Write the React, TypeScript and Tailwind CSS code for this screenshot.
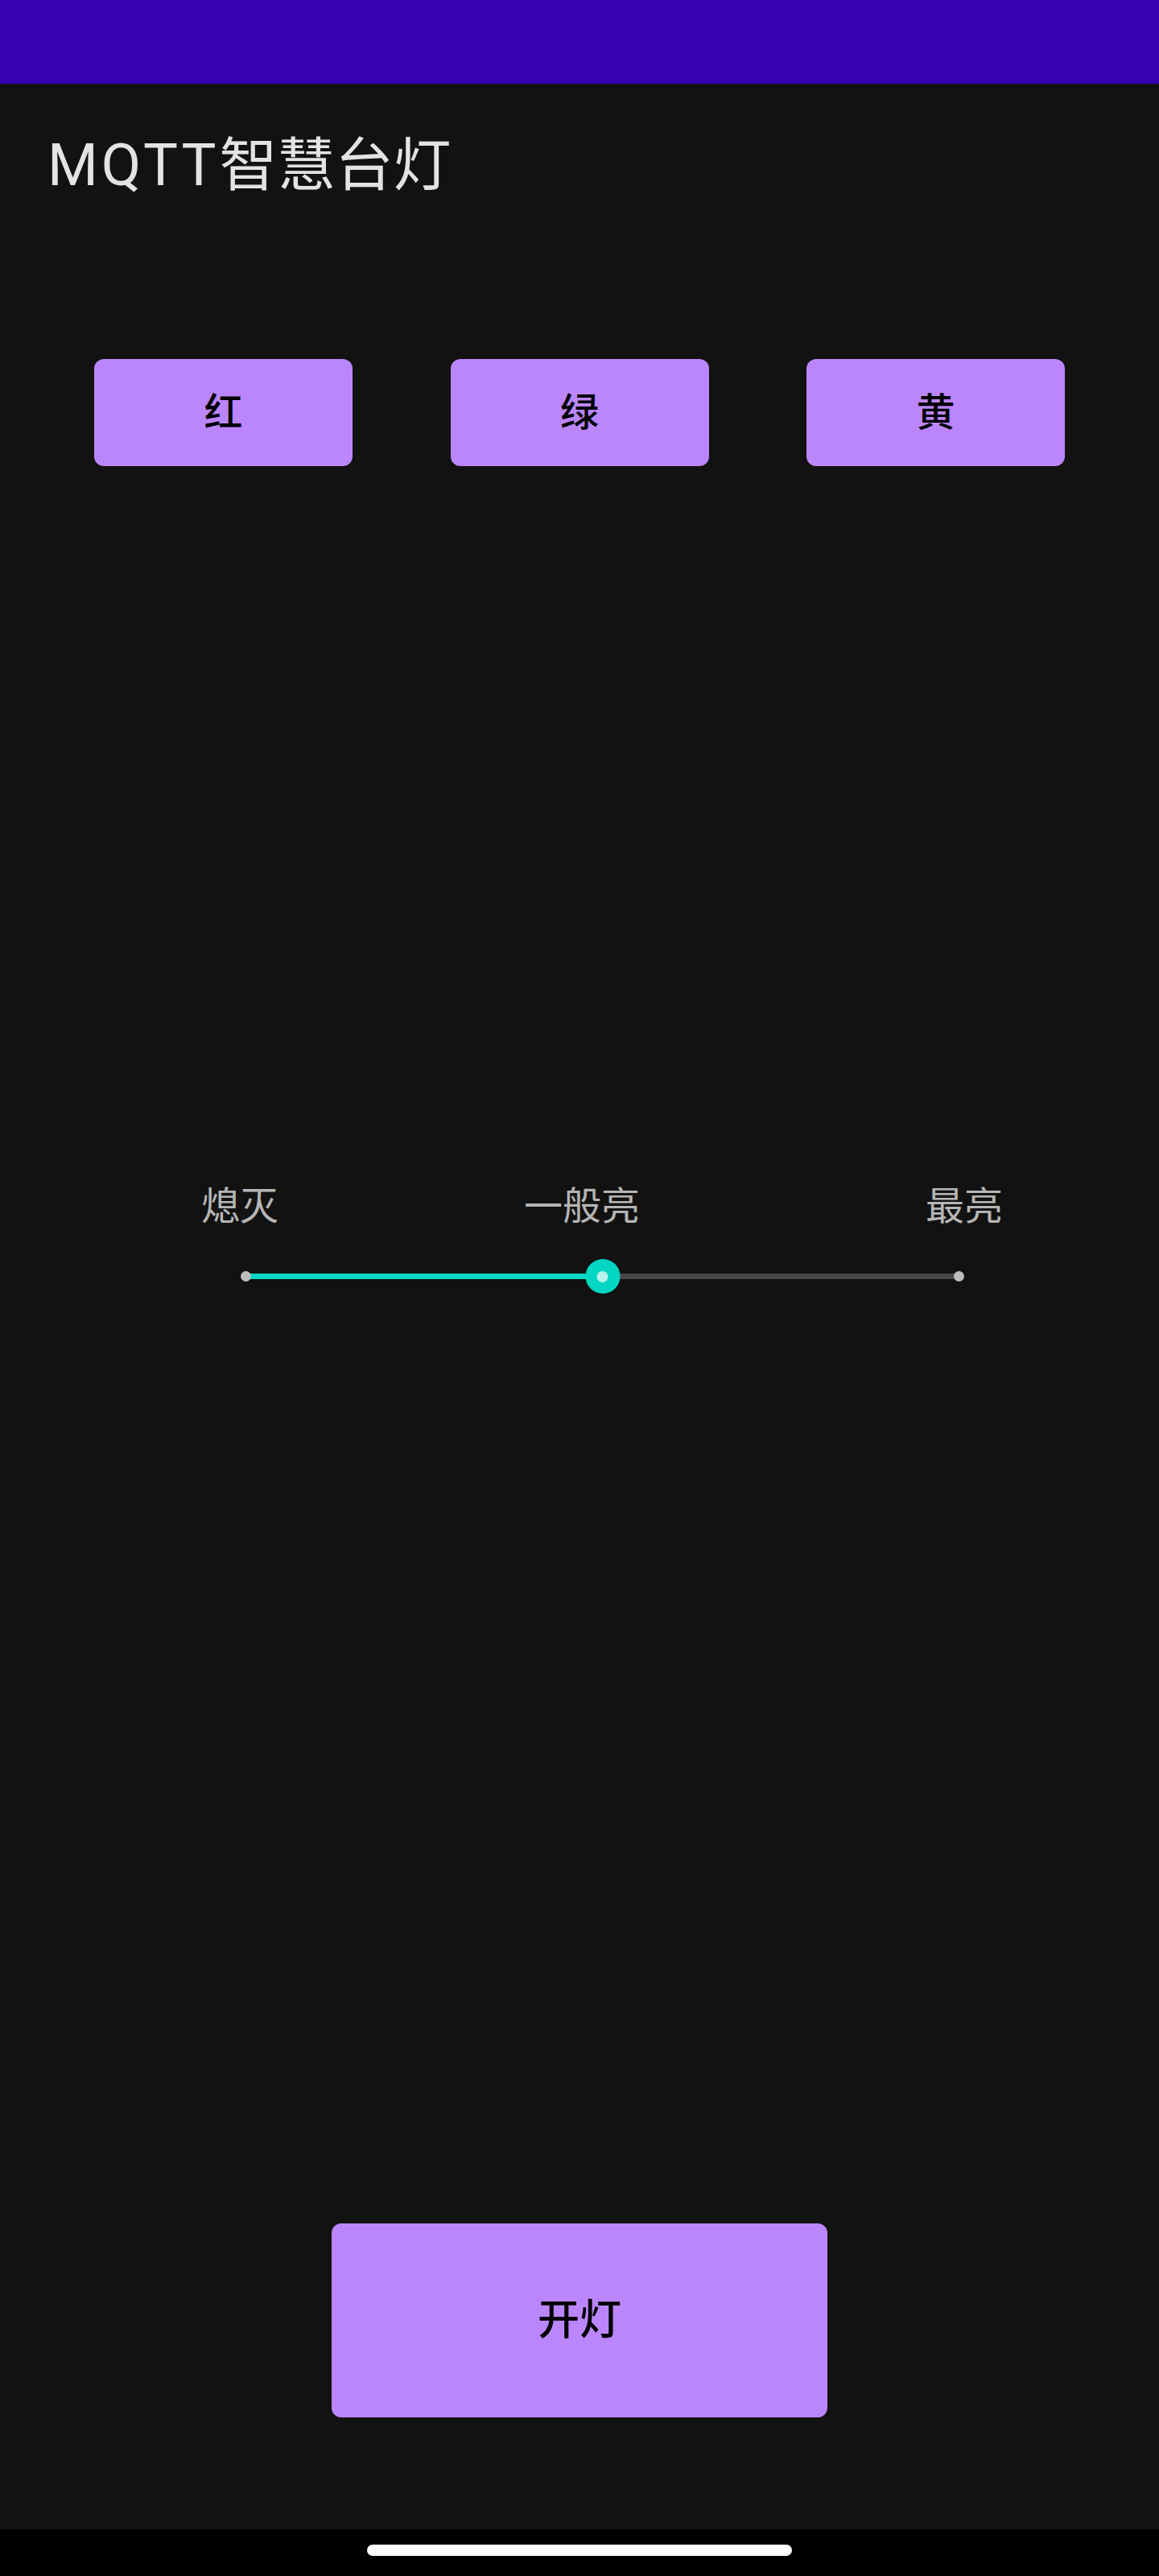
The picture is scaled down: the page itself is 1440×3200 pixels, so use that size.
import React from 'react';

// Colour buttons shown under the title
const COLORS = ['红', '绿', '黄'];

function ColorButton({ label }: { label: string }) {
  return (
    <button
      type="button"
      className="w-[321px] h-[133px] rounded-[12px] bg-[#bb86fc] text-black text-[48px] leading-none font-medium flex items-center justify-center"
    >
      {label}
    </button>
  );
}

function BrightnessSlider() {
  return (
    <div className="relative ml-[305px] w-[887px] h-[43px]">
      {/* inactive track */}
      <div className="absolute left-0 right-0 top-[18px] h-[7px] rounded-full bg-[#474747]" />
      {/* active track */}
      <div className="absolute left-0 top-[18px] h-[7px] w-1/2 rounded-full bg-[#03d6c2]" />
      {/* end ticks */}
      <div className="absolute left-[-6px] top-[15px] w-[13px] h-[13px] rounded-full bg-[#bdbdbd]" />
      <div className="absolute right-[-6px] top-[15px] w-[13px] h-[13px] rounded-full bg-[#bdbdbd]" />
      {/* thumb */}
      <div className="absolute left-1/2 top-0 -translate-x-1/2 w-[43px] h-[43px] rounded-full bg-[#03d6c2] flex items-center justify-center">
        <div className="w-[14px] h-[14px] rounded-full bg-[#b6f3ec]" />
      </div>
    </div>
  );
}

export default function App() {
  return (
    <div className="w-[1440px] h-[3200px] flex flex-col bg-[#121212] font-['Roboto','Noto_Sans_CJK_SC',sans-serif]">
      {/* status bar */}
      <div className="h-[104px] shrink-0 bg-[#3700b3]" />

      <div className="flex-1 flex flex-col">
        <h1 className="mt-[66px] ml-[59px] text-[72px] leading-[72px] text-[#e3e3e3] font-normal">
          <span className="tracking-[4px]">MQTT</span>智慧台灯
        </h1>

        <div className="mt-[204px] flex justify-between px-[117px]">
          {COLORS.map((c) => (
            <ColorButton key={c} label={c} />
          ))}
        </div>

        {/* brightness labels */}
        <div className="mt-[896px] flex pl-[250px] text-[48px] leading-[48px] text-[#b5b5b5]">
          <span>熄灭</span>
          <span className="ml-[305px]">一般亮</span>
          <span className="ml-[355px]">最亮</span>
        </div>

        <div className="mt-[41px]">
          <BrightnessSlider />
        </div>

        <div className="mt-auto mb-[139px] flex justify-center">
          <button
            type="button"
            className="w-[616px] h-[241px] rounded-[12px] bg-[#bb86fc] text-black text-[52px] leading-none font-medium flex items-center justify-center"
          >
            开灯
          </button>
        </div>
      </div>

      {/* navigation bar */}
      <div className="h-[58px] shrink-0 bg-black flex items-start justify-center pt-[19px]">
        <div className="w-[528px] h-[14px] rounded-full bg-white" />
      </div>
    </div>
  );
}
